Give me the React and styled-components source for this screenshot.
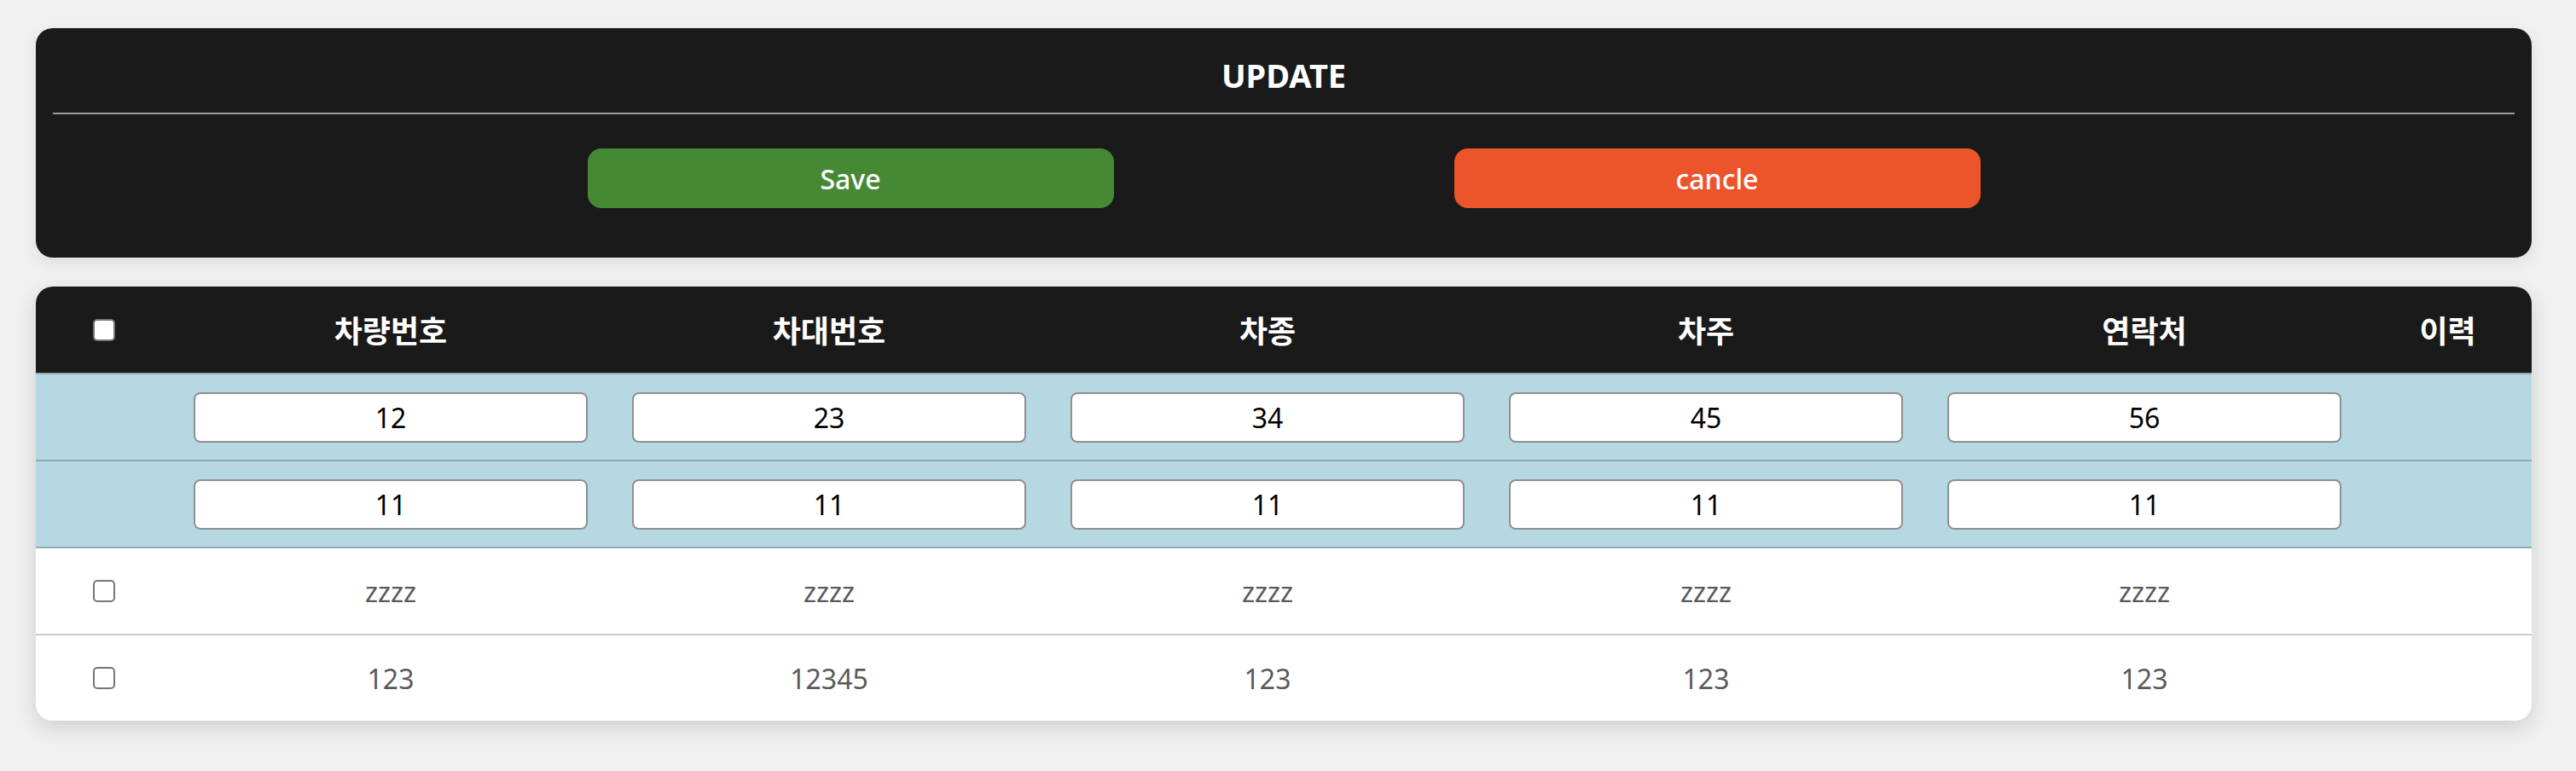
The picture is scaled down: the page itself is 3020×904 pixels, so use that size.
import React from 'react';
import styled, {createGlobalStyle} from "styled-components";

const GlobalStyle = createGlobalStyle`
  body {
    margin: 0;
    background: #f0f0f0;
    font-family: "Noto Sans", "Noto Sans CJK KR", sans-serif;
  }
`

const Page = styled.div`
  padding: 33px 0 40px 42px;
  display: flex;
  flex-direction: column;
  gap: 34px;
`

const Panel = styled.div`
  width: 2926px;
  box-sizing: border-box;
  background: #1a1a1a;
  border-radius: 20px;
  padding: 0 20px 58px 20px;
  box-shadow: 0 6px 18px rgba(0, 0, 0, 0.08);
`

const Title = styled.h2`
  margin: 0;
  height: 101px;
  box-sizing: border-box;
  padding-top: 10px;
  display: flex;
  align-items: center;
  justify-content: center;
  color: #fff;
  font-size: 38px;
  font-weight: 700;
  border-bottom: 2px solid #999;
`

const Actions = styled.div`
  display: flex;
  justify-content: center;
  gap: 399px;
  margin-top: 40px;
`

const Button = styled.button`
  width: 617px;
  height: 70px;
  border: none;
  border-radius: 16px;
  background: ${props => props.color};
  color: #fff;
  font-family: "Noto Sans", sans-serif;
  font-size: 32px;
  font-weight: 500;
  cursor: pointer;
`

const Table = styled.div`
  width: 2926px;
  background: #fff;
  border-radius: 20px;
  overflow: hidden;
  box-shadow: 0 8px 24px rgba(0, 0, 0, 0.14);
`

const Row = styled.div`
  display: grid;
  grid-template-columns: 159px repeat(5, 514px) 1fr;
  align-items: center;
  height: ${props => props.height || 102}px;
  box-sizing: border-box;
  background: ${props => props.bg || '#fff'};
  border-top: ${props => props.line ? `2px solid ${props.line}` : 'none'};
`

const HeadCell = styled.div`
  text-align: center;
  color: #fff;
  font-size: 36px;
  font-weight: 600;
`

const Cell = styled.div`
  display: flex;
  justify-content: center;
  color: #5a5a5a;
  font-size: 32px;
`

const Check = styled.input.attrs({type: 'checkbox'})`
  appearance: none;
  margin: 0;
  width: 26px;
  height: 26px;
  box-sizing: border-box;
  border: 2px solid #767676;
  border-radius: 5px;
  background: #fff;
`

const Field = styled.input`
  width: 462px;
  height: 59px;
  box-sizing: border-box;
  border: 2px solid #8f8f8f;
  border-radius: 8px;
  background: #fff;
  text-align: center;
  font-family: "Noto Sans", sans-serif;
  font-size: 32px;
  color: #000;
  outline: none;
`

const headers = ['차량번호', '차대번호', '차종', '차주', '연락처'];
const editRows = [
    ['12', '23', '34', '45', '56'],
    ['11', '11', '11', '11', '11'],
];
const dataRows = [
    ['zzzz', 'zzzz', 'zzzz', 'zzzz', 'zzzz'],
    ['123', '12345', '123', '123', '123'],
];

export default function App() {
    return (
        <>
            <GlobalStyle/>
            <Page>
                <Panel>
                    <Title>UPDATE</Title>
                    <Actions>
                        <Button color="#458934">Save</Button>
                        <Button color="#ec552b">cancle</Button>
                    </Actions>
                </Panel>
                <Table>
                    <Row height={101} bg="#1a1a1a">
                        <Cell><Check/></Cell>
                        {headers.map(h => <HeadCell key={h}>{h}</HeadCell>)}
                        <HeadCell>이력</HeadCell>
                    </Row>
                    {editRows.map((r, i) => (
                        <Row key={'e' + i} bg="#b6d8e3" line="#93aab4">
                            <Cell/>
                            {r.map((v, j) => <Cell key={j}><Field defaultValue={v}/></Cell>)}
                            <Cell/>
                        </Row>
                    ))}
                    {dataRows.map((r, i) => (
                        <Row key={'d' + i} line={i === 0 ? '#93aab4' : '#cccccc'}>
                            <Cell><Check/></Cell>
                            {r.map((v, j) => <Cell key={j}>{v}</Cell>)}
                            <Cell/>
                        </Row>
                    ))}
                </Table>
            </Page>
        </>
    );
}
